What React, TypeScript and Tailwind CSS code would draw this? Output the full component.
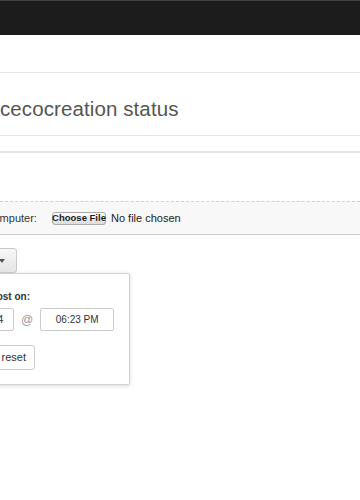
import React from "react";

export default function App() {
  return (
    <div className="h-[500px] w-[360px] overflow-hidden bg-white font-['Liberation_Sans',Arial,sans-serif] text-[#333]">
      {/* top navbar */}
      <div className="h-[35px] border-t border-[#444] bg-[#1c1c1c]" />

      <div className="h-[38px] border-b border-[#e6e6e6]" />

      {/* page title */}
      <div className="flex h-[63px] items-center border-b border-[#e6e6e6] pt-[11px]">
        <h1 className="text-[20.5px] font-normal tracking-[0.1px] text-[#555]">
          cecocreation status
        </h1>
      </div>

      <div className="h-[15px]" />
      <div className="h-[50px] border-t-2 border-[#e3e3e3]" />

      {/* upload row */}
      <div className="border-b border-solid border-[#cdcdcd] bg-[#f8f8f8]">
        <div className="flex h-[33px] items-center border-t border-dashed border-[#d0d0d0] text-[11px] text-[#333]">
          <span className="-ml-[12px] w-[64px] shrink-0 whitespace-nowrap">computer:</span>
          <span className="flex h-[13px] w-[54px] shrink-0 items-center justify-center whitespace-nowrap rounded-[3px] border border-[#a9a9a9] bg-gradient-to-b from-white to-[#dcdcdc] text-[9.5px] font-bold leading-none text-[#222]">
            Choose File
          </span>
          <span className="ml-[5px] whitespace-nowrap text-[#222]">No file chosen</span>
        </div>
      </div>

      {/* schedule dropdown */}
      <div className="mt-[13px] -ml-[40px] flex">
        <button className="flex h-[25px] w-[57px] items-center justify-end rounded-[3px] border border-[#c8c8c8] bg-gradient-to-b from-[#f7f7f7] to-[#e4e4e4] pr-[11px] text-[11px] text-[#333]">
          <span className="mr-[6px]">Post</span>
          <span className="h-0 w-0 border-l-[3px] border-r-[3px] border-t-[4px] border-l-transparent border-r-transparent border-t-[#555]" />
        </button>
      </div>

      <div className="mt-0 -ml-[71px] flex h-[112px] w-[201px] flex-col rounded-[2px] border border-[#d2d2d2] bg-white pl-[10px] pt-[16px] shadow-[0_1px_4px_rgba(0,0,0,0.15)]">
        <div className="ml-[50px] whitespace-nowrap text-[10px] font-bold leading-[13px] text-[#333]">Post on:</div>
        <div className="mt-[5px] flex items-center">
          <div className="flex h-[23px] w-[74px] items-center justify-center rounded-[2px] border border-[#ccc] bg-white text-[10.5px] text-[#333]">
            10/12/2014
          </div>
          <span className="mx-[7px] text-[12px] text-[#999]">@</span>
          <div className="flex h-[23px] w-[74px] items-center justify-center rounded-[2px] border border-[#ccc] bg-white text-[10px] text-[#333]">
            06:23 PM
          </div>
        </div>
        <button className="ml-[52px] mt-[14px] flex h-[25px] w-[43px] items-center justify-end rounded-[3px] border border-[#ccc] bg-white pr-[8px] text-[11px] text-[#333]">
          reset
        </button>
      </div>
    </div>
  );
}
